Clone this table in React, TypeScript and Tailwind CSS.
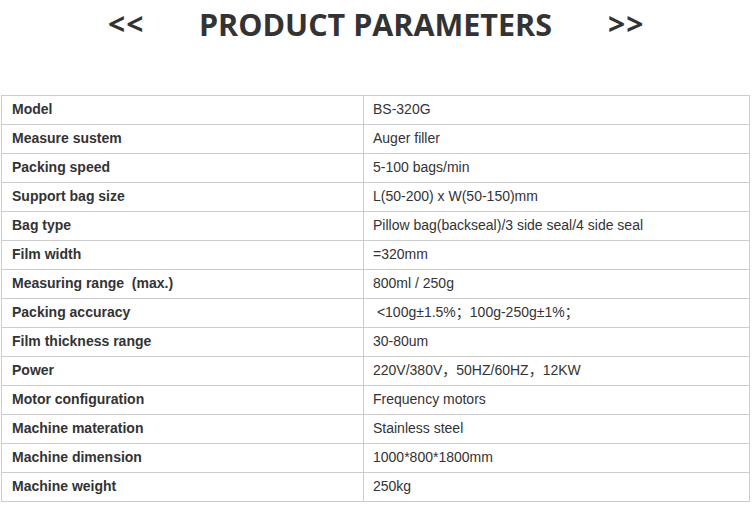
import React from 'react';

const rows: [string, string][] = [
  ['Model', 'BS-320G'],
  ['Measure sustem', 'Auger filler'],
  ['Packing speed', '5-100 bags/min'],
  ['Support bag size', 'L(50-200) x W(50-150)mm'],
  ['Bag type', 'Pillow bag(backseal)/3 side seal/4 side seal'],
  ['Film width', '=320mm'],
  ['Measuring range  (max.)', '800ml / 250g'],
  ['Packing accuracy', '\u00a0<100g±1.5%；100g-250g±1%；'],
  ['Film thickness range', '30-80um'],
  ['Power', '220V/380V，50HZ/60HZ，12KW'],
  ['Motor configuration', 'Frequency motors'],
  ['Machine materation', 'Stainless steel'],
  ['Machine dimension', '1000*800*1800mm'],
  ['Machine weight', '250kg'],
];

export default function App() {
  return (
    <div
      className="w-[755px] h-[505px] bg-white overflow-hidden"
      style={{ fontFamily: '"Liberation Sans", Arial, "Noto Sans CJK SC", sans-serif' }}
    >
      {/* title bar */}
      <div className="h-[95px] pt-[6px]">
        <div className="flex items-center h-[36px] text-[#333]" style={{ fontFamily: '"Open Sans", sans-serif' }}>
          <span className="w-[108px]" />
          <span className="w-[35px] text-left text-[30px] font-bold leading-none tracking-[1px]">&lt;&lt;</span>
          <span className="flex-1 text-center text-[30.5px] font-bold leading-none">PRODUCT PARAMETERS</span>
          <span className="w-[35px] text-right text-[30px] font-bold leading-none tracking-[1px]">&gt;&gt;</span>
          <span className="w-[112px]" />
        </div>
      </div>

      {/* parameter table */}
      <table className="ml-[1px] w-[749px] border-collapse text-[14px] text-[#333]">
        <tbody>
          {rows.map(([k, v]) => (
            <tr key={k} className="h-[29px]">
              <td className="w-[362px] border border-[#ccc] pl-[10px] pt-0 pb-[2px] font-bold whitespace-pre">{k}</td>
              <td className="border border-[#ccc] pl-[9px] pt-0 pb-[2px] whitespace-pre">{v}</td>
            </tr>
          ))}
        </tbody>
      </table>
    </div>
  );
}
